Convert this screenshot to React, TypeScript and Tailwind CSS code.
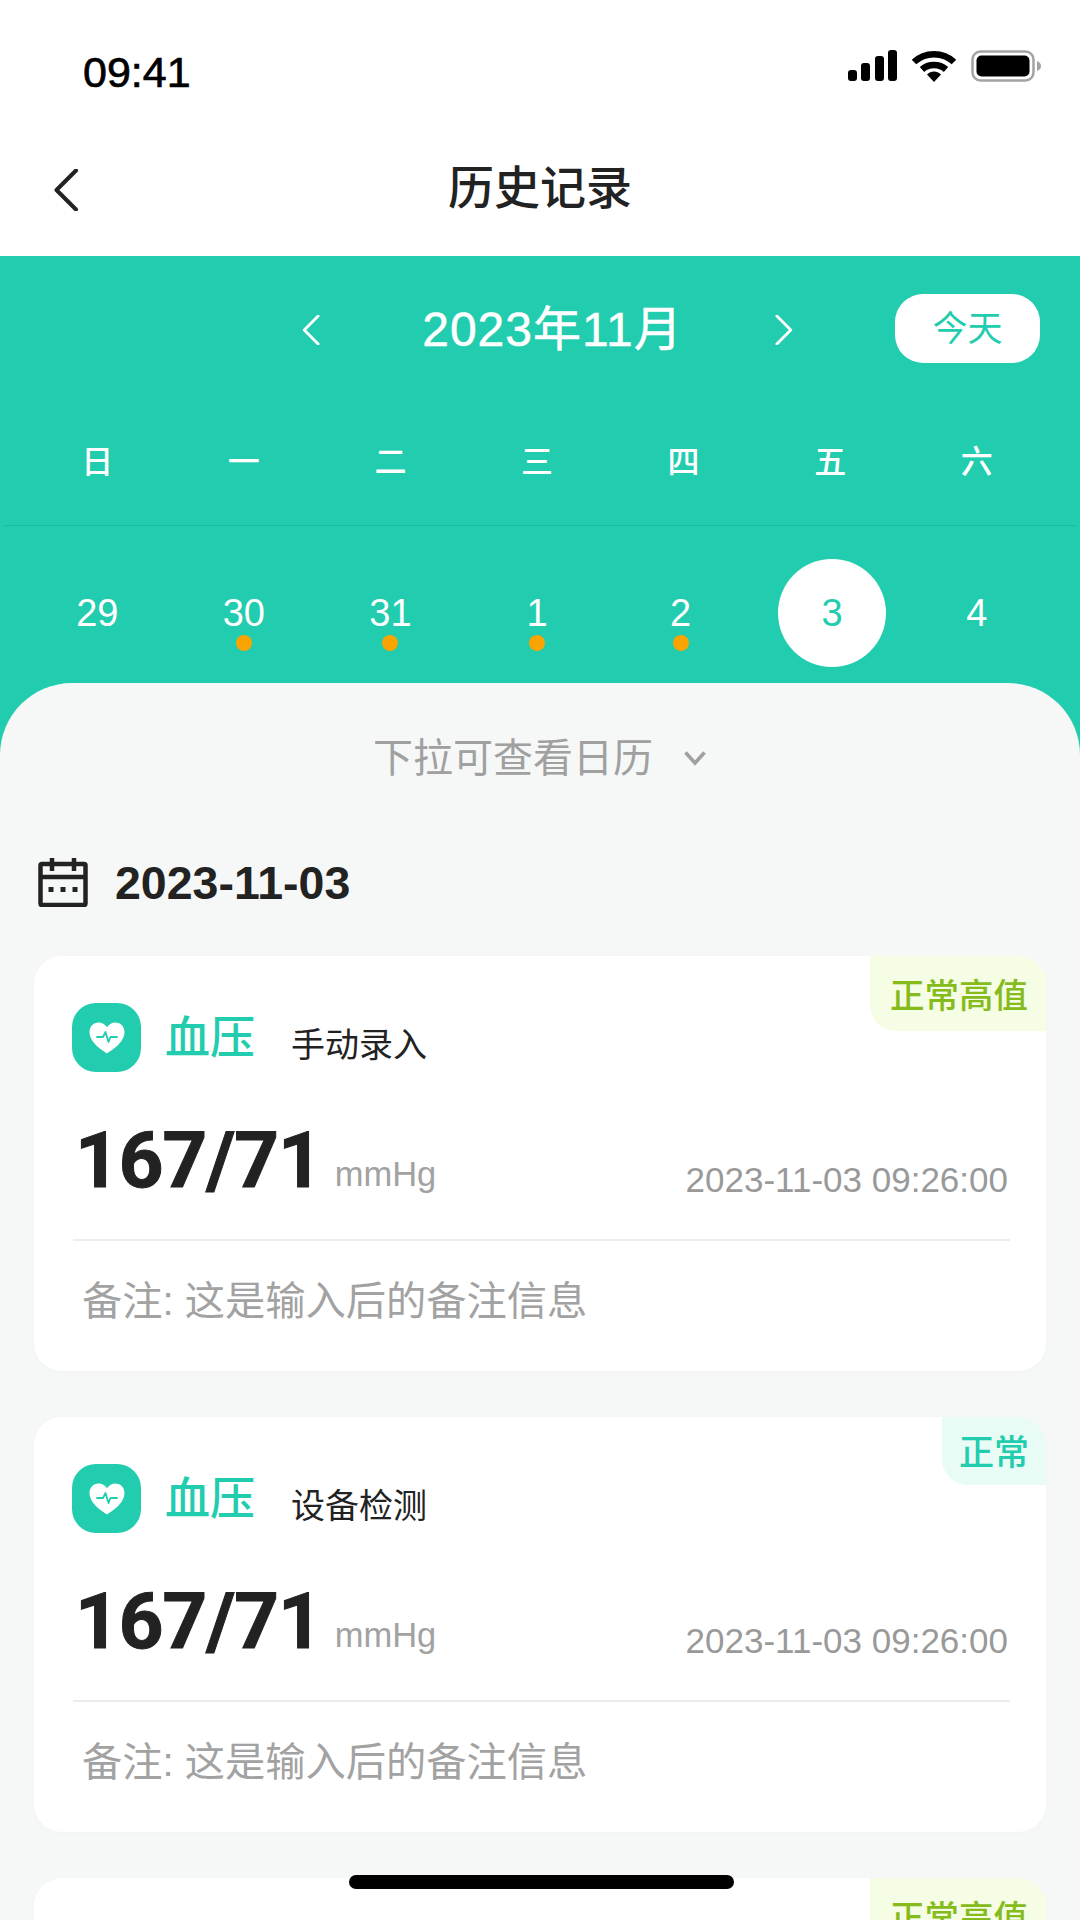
import React from 'react'

const weekDays = ['日', '一', '二', '三', '四', '五', '六']
const dates = [
  { label: '29', dot: false, active: false, shift: '' },
  { label: '30', dot: true, active: false, shift: '' },
  { label: '31', dot: true, active: false, shift: '' },
  { label: '1', dot: true, active: false, shift: '' },
  { label: '2', dot: true, active: false, shift: '-translate-x-[3px]' },
  { label: '3', dot: false, active: true, shift: '' },
  { label: '4', dot: false, active: false, shift: '' },
]

const Chevron = ({ dir, className }: { dir: 'left' | 'right'; className: string }) => (
  <svg viewBox="0 0 24 42" fill="none" className={className}>
    <path
      d={dir === 'left' ? 'M22 1.5 2.5 21 22 40.5' : 'M2 1.5 21.5 21 2 40.5'}
      stroke="currentColor"
      strokeWidth="4"
      strokeLinecap="round"
      strokeLinejoin="round"
    />
  </svg>
)

const StatusIcons = () => (
  <div className="flex items-center mt-[2px]">
    <svg viewBox="0 0 50 34" className="w-[50px] h-[34px]" fill="#000">
      <rect x="0" y="21" width="9" height="11" rx="3" />
      <rect x="13" y="14" width="9" height="18" rx="3" />
      <rect x="27" y="7" width="9" height="25" rx="3" />
      <rect x="40" y="1" width="9" height="31" rx="3" />
    </svg>
    <svg viewBox="0 0 46 34" className="w-[46px] h-[34px] ml-[13px]" fill="none" stroke="#000">
      <path d="M3 13C14 2.500 32 2.500 43 13" strokeWidth="6.500" />
      <path d="M11 20.500C17.500 14.500 28.500 14.500 35 20.500" strokeWidth="6.500" />
      <path d="M16 25.500 23 33 30 25.500C26 21.500 20 21.500 16 25.500Z" fill="#000" stroke="none" />
    </svg>
    <svg viewBox="0 0 70 34" className="w-[70px] h-[34px] ml-[14px]" fill="none">
      <rect x="1.500" y="2.500" width="61" height="29" rx="8" stroke="#a3a3a3" strokeWidth="2.500" />
      <rect x="5.500" y="6.500" width="53" height="21" rx="5" fill="#000" />
      <path d="M66 12c3 1 4 3 4 5s-1 4-4 5Z" fill="#a3a3a3" />
    </svg>
  </div>
)

const CalendarIcon = () => (
  <svg viewBox="0 0 50 50" className="w-[50px] h-[50px]" fill="none" stroke="#222" strokeWidth="4.500">
    <rect x="2.500" y="7" width="45" height="41" rx="1.500" />
    <path d="M2 20h46M14 1v13M36 1v13" />
    <path d="M10.500 32.500h5M22.500 32.500h5M34.500 32.500h5" strokeWidth="5" />
  </svg>
)

const HeartIcon = () => (
  <div className="w-[69px] h-[69px] rounded-[24px] bg-[#22ccae] flex items-center justify-center">
    <svg viewBox="0 0 36 32" className="w-[36px] h-[32px]">
      <path
        d="M18 31.500C13 28 0.500 20.500 0.500 10C0.500 4.500 4.500 0.500 9.500 0.500C13 0.500 16 2.200 18 5.200C20 2.200 23 0.500 26.500 0.500C31.500 0.500 35.500 4.500 35.500 10C35.500 20.500 23 28 18 31.500Z"
        fill="#fff"
      />
      <path
        d="M8 15h6l2.500-5 3 10 2-5h6.500"
        fill="none"
        stroke="#22ccae"
        strokeWidth="1.800"
        strokeLinecap="round"
        strokeLinejoin="round"
      />
    </svg>
  </div>
)

const RecordCard = ({
  source,
  status,
  normal,
}: {
  source: string
  status: string
  normal?: boolean
}) => (
  <div className="relative shrink-0 h-[415px] bg-white rounded-[28px] pt-[47px] shadow-[0_2px_10px_rgba(0,0,0,0.015)]">
    {normal ? (
      <div className="absolute top-0 right-0 w-[104px] h-[68px] pt-[2px] flex items-center justify-center rounded-tr-[28px] rounded-bl-[26px] bg-[#e9fbf5] text-[#22ccae] text-[35px] font-medium leading-none">
        {status}
      </div>
    ) : (
      <div className="absolute top-0 right-0 w-[176px] h-[75px] pt-[5px] pl-[2px] flex items-center justify-center rounded-tr-[28px] rounded-bl-[26px] bg-[#f5fde4] text-[#85bb1b] text-[34.500px] font-medium leading-none">
        {status}
      </div>
    )}
    <div className="flex items-center pl-[38px]">
      <HeartIcon />
      <span className="ml-[24px] mt-[2px] text-[45px] font-medium leading-none text-[#22ccae]">血压</span>
      <span className="ml-[36px] mt-[14px] text-[34px] leading-none text-[#222]">{source}</span>
    </div>
    <div className="flex items-end justify-between mt-[52px] pl-[41px] pr-[38px] h-[76px]">
      <div className="flex items-end">
        <span className="font-['Roboto',sans-serif] text-[78px] font-bold leading-none tracking-[-1px] text-[#222] [-webkit-text-stroke:1px_#222]">
          167/71
        </span>
        <span className="ml-[13px] mb-[9px] text-[34.500px] leading-none text-[#a2a2a2]">mmHg</span>
      </div>
      <span className="mb-[3px] text-[35px] leading-none text-[#999]">2023-11-03 09:26:00</span>
    </div>
    <div className="ml-[39px] mr-[36px] mt-[39px] h-[2px] bg-[#ececec]" />
    <div className="mt-[41px] pl-[48px] text-[40.250px] leading-none text-[#a2a2a2]">备注: 这是输入后的备注信息</div>
  </div>
)

const App = () => {
  return (
    <div className="relative w-[1080px] h-[1920px] overflow-hidden flex flex-col bg-white font-['Liberation_Sans','Noto_Sans_CJK_SC',sans-serif]">
      <div className="flex items-start justify-between h-[128px] pt-[47px] pl-[83px] pr-[39px] shrink-0">
        <span className="mt-[1px] text-[43px] leading-[48px] text-black [-webkit-text-stroke:0.7px_black]">09:41</span>
        <StatusIcons />
      </div>

      <div className="relative flex items-center justify-center h-[128px] pb-[8px] shrink-0">
        <Chevron dir="left" className="absolute left-[54px] top-[41px] w-[24px] h-[42px] text-[#222]" />
        <span className="text-[46px] font-medium leading-none text-[#222]">历史记录</span>
      </div>

      <div className="flex-1 flex flex-col bg-[#22ccae] min-h-0">
        <div className="relative flex items-center justify-center h-[148px] pl-[15px] shrink-0 text-white">
          <Chevron dir="left" className="w-[18px] h-[30px] mr-[102px]" />
          <span className="text-[48px] leading-none tracking-[1px] [-webkit-text-stroke:0.5px_white]">2023年11月</span>
          <Chevron dir="right" className="w-[18px] h-[30px] ml-[92px]" />
          <div className="absolute right-[40px] top-[38px] w-[145px] h-[69px] flex items-center justify-center rounded-[28px] bg-white text-[35px] leading-none text-[#22ccae]">
            今天
          </div>
        </div>

        <div className="grid grid-cols-7 pl-[24px] pr-[30px] h-[121px] pb-[6px] shrink-0 items-center">
          {weekDays.map((d) => (
            <div key={d} className="text-center text-[32px] font-medium leading-none text-white">
              {d}
            </div>
          ))}
        </div>
        <div className="mx-[4px] h-[1px] bg-[#1dba9e] shrink-0" />

        <div className="grid grid-cols-7 pl-[24px] pr-[30px] h-[157px] shrink-0 pt-[33px]">
          {dates.map((d) =>
            d.active ? (
              <div key={d.label} className="flex justify-center">
                <div className="w-[108px] h-[108px] ml-[4px] rounded-full bg-white flex items-center justify-center text-[38px] leading-none text-[#22ccae]">
                  {d.label}
                </div>
              </div>
            ) : (
              <div key={d.label} className={`relative flex flex-col items-center h-[108px] pt-[35px] ${d.shift}`}>
                <span className="text-[38px] leading-none text-white">{d.label}</span>
                {d.dot && <span className="absolute top-[76px] w-[16px] h-[16px] rounded-full bg-[#f9a400]" />}
              </div>
            ),
          )}
        </div>

        <div className="flex-1 min-h-0 bg-[#f6f8f7] rounded-t-[72px] px-[34px]">
          <div className="flex items-center justify-center h-[150px] text-[40px] leading-none text-[#a0a0a0]">
            <span>下拉可查看日历</span>
            <svg viewBox="0 0 24 16" fill="none" className="ml-[30px] w-[24px] h-[16px]">
              <path d="M2.500 2.500 12 13 21.500 2.500" stroke="#a0a0a0" strokeWidth="3.600" />
            </svg>
          </div>
          <div className="flex items-center h-[50px] pl-[4px] mt-[24px]">
            <CalendarIcon />
            <span className="ml-[27px] mt-[3px] text-[46.500px] font-bold leading-none text-[#222]">2023-11-03</span>
          </div>
          <div className="flex flex-col gap-[46px] mt-[49px]">
            <RecordCard source="手动录入" status="正常高值" />
            <RecordCard source="设备检测" status="正常" normal />
            <RecordCard source="手动录入" status="正常高值" />
          </div>
        </div>
      </div>

      <div className="absolute left-[349px] top-[1875px] w-[385px] h-[14px] rounded-full bg-black" />
    </div>
  )
}

export default App
